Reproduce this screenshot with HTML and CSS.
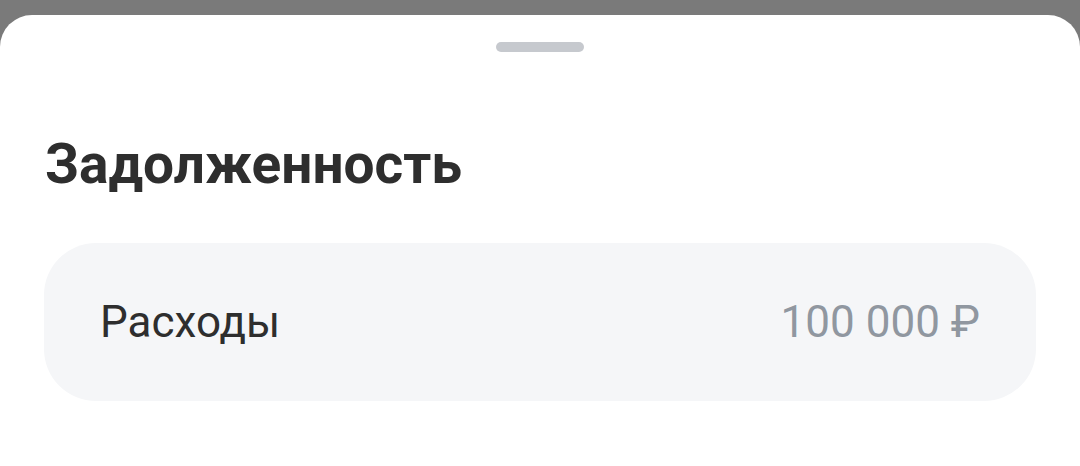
FILE: index.html
```html
<!DOCTYPE html>
<html lang="ru">
<head>
    <meta charset="UTF-8">
    <meta name="viewport" content="width=device-width, initial-scale=1.0">
    <title>Задолженность</title>
    <link rel="stylesheet" href="styles.css">
</head>
<body>
    <div class="sheet">
        <!-- Ручка для перетаскивания -->
        <div class="handle"></div>

        <h1 class="title">Задолженность</h1>

        <!-- Строка с суммой -->
        <div class="row">
            <span class="row-label">Расходы</span>
            <span class="row-value">100 000 ₽</span>
        </div>
    </div>
</body>
</html>
```

FILE: styles.css
```css
html, body {
    height: 100%;
}
body {
    margin: 0;
    padding-top: 15px;
    box-sizing: border-box;
    background-color: #7a7a7a;
    font-family: Roboto, "Noto Sans", sans-serif;
    color: #333;
    overflow: hidden;
}
.sheet {
    height: 100%;
    box-sizing: border-box;
    padding: 27px 44px 0;
    background: #fff;
    border-radius: 32px 32px 0 0;
}
.handle {
    width: 88px;
    height: 10px;
    margin: 0 auto;
    border-radius: 5px;
    background-color: #c6c9ce;
}
.title {
    margin: 76px 0 0 1px;
    font-size: 55px;
    font-weight: 700;
    line-height: 72px;
    color: #2e2e2e;
}
.row {
    display: flex;
    justify-content: space-between;
    align-items: center;
    height: 158px;
    margin-top: 43px;
    padding: 0 56px;
    box-sizing: border-box;
    border-radius: 52px;
    background-color: #f5f6f8;
    font-size: 44px;
}
.row-label {
    color: #2e2e2e;
}
.row-value {
    color: #9097a0;
}
```
